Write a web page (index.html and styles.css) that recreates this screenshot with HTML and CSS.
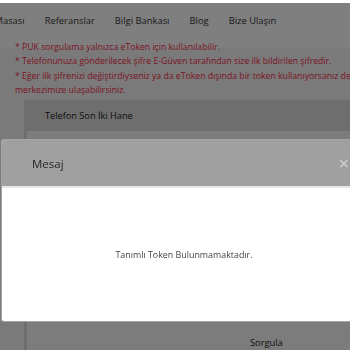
FILE: index.html
```html
<!DOCTYPE html>
<html lang="tr">
<head>
<meta charset="utf-8">
<title>Mesaj</title>
<link rel="stylesheet" href="styles.css">
</head>
<body>
<div class="page">
  <div class="topgap"></div>
  <nav class="nav">
    <span class="nav-item">Yardım Masası</span>
    <span class="nav-item">Referanslar</span>
    <span class="nav-item">Bilgi Bankası</span>
    <span class="nav-item">Blog</span>
    <span class="nav-item">Bize Ulaşın</span>
  </nav>
  <div class="notes">
    <div class="notes-inner">
      <p>* PUK sorgulama yalnızca eToken için kullanılabilir.</p>
      <p>* Telefonunuza gönderilecek şifre E-Güven tarafından size ilk bildirilen şifredir.</p>
      <p>* Eğer ilk şifrenizi değiştirdiyseniz ya da eToken dışında bir token kullanıyorsanız destek<br>merkezimize ulaşabilirsiniz.</p>
    </div>
  </div>
  <div class="panel">
    <div class="panel-head">Telefon Son İki Hane</div>
    <div class="panel-body">
      <div class="btn">Sorgula</div>
    </div>
  </div>
</div>
<div class="overlay"></div>
<div class="modal">
  <div class="modal-head">
    <span class="modal-title">Mesaj</span>
    <span class="close">×</span>
  </div>
  <div class="modal-body">Tanımlı Token Bulunmamaktadır.</div>
</div>
</body>
</html>
```
FILE: styles.css
```css
html, body {
  margin: 0;
  padding: 0;
  height: 100%;
  overflow: hidden;
}
body {
  background: #f4f4f4;
  font-family: "Open Sans", "DejaVu Sans", sans-serif;
  color: #333;
}
.page {
  width: 350px;
}
.topgap {
  height: 3px;
  background: #fff;
}
.nav {
  height: 39px;
  background: #fff;
  display: flex;
  align-items: center;
  gap: 20px;
  margin-left: -39px;
  font-size: 9.4px;
  color: #333;
  white-space: nowrap;
}
.nav-item {
  line-height: 13px;
  position: relative;
  top: -2px;
}
.notes {
  height: 58px;
  overflow: hidden;
  background: linear-gradient(#fff 0, #fff 6px, #f4f4f4 6px);
}
.notes-inner {
  margin-top: -2px;
  padding-left: 15px;
  font-size: 8.7px;
  line-height: 14.3px;
  color: #f52a48;
  white-space: nowrap;
}
.notes-inner p {
  margin: 0;
}
.panel {
  margin-left: 24px;
  width: 340px;
  border-left: 3px solid #dcdcdc;
}
.panel-head {
  height: 31px;
  background: #dcdcdc;
  margin-left: -3px;
  padding-left: 21px;
  font-size: 9.2px;
  line-height: 31px;
  color: #222;
}
.panel-body {
  background: #f8f8f8;
  height: 240px;
  padding-top: 206px;
  padding-left: 223px;
  box-sizing: border-box;
}
.btn {
  font-size: 9.3px;
  line-height: 12px;
  color: #222;
}
.overlay {
  position: fixed;
  left: 0;
  right: 0;
  top: 3px;
  bottom: 0;
  background: rgba(0, 0, 0, 0.5);
}
.modal {
  position: fixed;
  left: 1px;
  top: 139px;
  width: 364px;
  border: 1px solid #a4a4a4;
  border-radius: 3px;
  background: #fff;
  overflow: hidden;
}
.modal-head {
  height: 48px;
  background: #a0a0a0;
  border-bottom: 2px solid #e6e6e6;
  display: flex;
  align-items: center;
  justify-content: space-between;
  padding: 0 17px 0 30px;
  box-sizing: border-box;
}
.modal-title {
  font-size: 11.5px;
  color: #262626;
}
.close {
  font-size: 18px;
  line-height: 1;
  color: #d4d4d4;
}
.modal-body {
  height: 133px;
  display: flex;
  align-items: center;
  justify-content: center;
  font-size: 8.9px;
  color: #444;
}
```
